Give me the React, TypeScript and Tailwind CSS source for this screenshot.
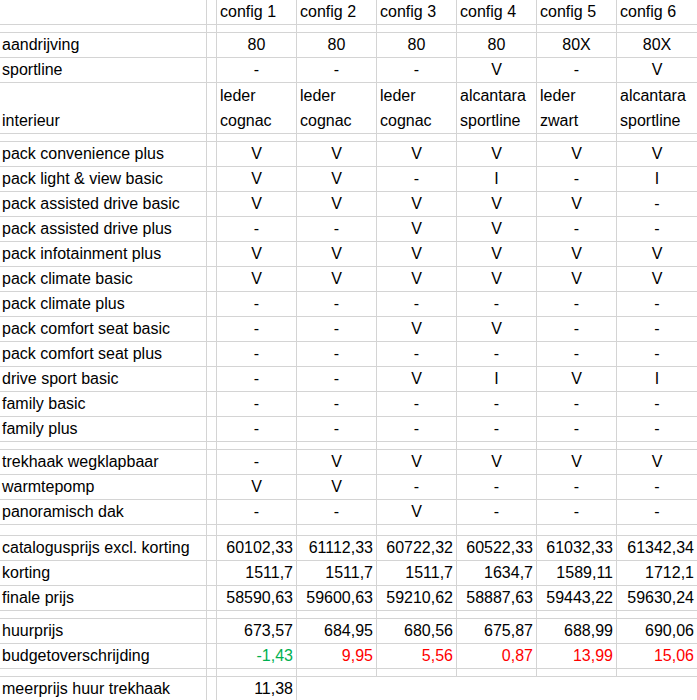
import React from 'react';

type Row =
  | { kind: 'gap'; tall?: boolean }
  | { kind: 'row'; label: string; cells: string[]; align?: 'center' | 'right'; colors?: string[]; tall?: boolean; partial?: boolean };

const packs: [string, string][] = [
  ['pack convenience plus', 'VVVVVV'],
  ['pack light & view basic', 'VV-I-I'],
  ['pack assisted drive basic', 'VVVVV-'],
  ['pack assisted drive plus', '--VV--'],
  ['pack infotainment plus', 'VVVVVV'],
  ['pack climate basic', 'VVVVVV'],
  ['pack climate plus', '------'],
  ['pack comfort seat basic', '--VV--'],
  ['pack comfort seat plus', '------'],
  ['drive sport basic', '--VIVI'],
  ['family basic', '------'],
  ['family plus', '------'],
];

const extras: [string, string][] = [
  ['trekhaak wegklapbaar', '-VVVVV'],
  ['warmtepomp', 'VV----'],
  ['panoramisch dak', '--V---'],
];

const green = 'text-[#00b050]';
const red = 'text-[#ff0000]';

const rows: Row[] = [
  { kind: 'gap' },
  { kind: 'row', label: 'aandrijving', cells: ['80', '80', '80', '80', '80X', '80X'] },
  { kind: 'row', label: 'sportline', cells: ['-', '-', '-', 'V', '-', 'V'] },
  { kind: 'row', label: 'interieur', tall: true, cells: ['leder|cognac', 'leder|cognac', 'leder|cognac', 'alcantara|sportline', 'leder|zwart', 'alcantara|sportline'] },
  { kind: 'gap' },
  ...packs.map(([l, v]) => ({ kind: 'row' as const, label: l, cells: v.split('') })),
  { kind: 'gap' },
  ...extras.map(([l, v]) => ({ kind: 'row' as const, label: l, cells: v.split('') })),
  { kind: 'gap', tall: true },
  { kind: 'row', label: 'catalogusprijs excl. korting', align: 'right', cells: ['60102,33', '61112,33', '60722,32', '60522,33', '61032,33', '61342,34'] },
  { kind: 'row', label: 'korting', align: 'right', cells: ['1511,7', '1511,7', '1511,7', '1634,7', '1589,11', '1712,1'] },
  { kind: 'row', label: 'finale prijs', align: 'right', cells: ['58590,63', '59600,63', '59210,62', '58887,63', '59443,22', '59630,24'] },
  { kind: 'gap' },
  { kind: 'row', label: 'huurprijs', align: 'right', cells: ['673,57', '684,95', '680,56', '675,87', '688,99', '690,06'] },
  { kind: 'row', label: 'budgetoverschrijding', align: 'right', colors: [green, red, red, red, red, red], cells: ['-1,43', '9,95', '5,56', '0,87', '13,99', '15,06'] },
  { kind: 'gap' },
  { kind: 'row', label: 'meerprijs huur trekhaak', align: 'right', partial: true, cells: ['11,38', '', '', '', '', ''] },
];

const cell = 'border-r border-b border-[#d4d4d4]';

export default function App() {
  return (
    <div className="w-[697px] h-[700px] overflow-hidden bg-white text-[16px] text-black" style={{ fontFamily: '"Liberation Sans", Arial, sans-serif' }}>
      <div className="grid grid-cols-[207px_10px_repeat(6,80px)]">
        {/* header */}
        <div className={`${cell} h-[25px]`} />
        <div className={`${cell} h-[25px]`} />
        {[1, 2, 3, 4, 5, 6].map((n) => (
          <div key={n} className={`${cell} h-[25px] px-[3px] flex items-end whitespace-nowrap ${n === 6 ? 'border-r-0' : ''}`}>config {n}</div>
        ))}
        {rows.map((r, i) => {
          if (r.kind === 'gap') {
            return (
              <React.Fragment key={i}>
                {Array.from({ length: 8 }).map((_, j) => (
                  <div key={j} className={`${cell} ${r.tall ? 'h-[11px]' : 'h-[8px]'} ${j === 7 ? 'border-r-0' : ''}`} />
                ))}
              </React.Fragment>
            );
          }
          const h = r.tall ? 'h-[51px]' : 'h-[25px]';
          return (
            <React.Fragment key={i}>
              <div className={`${cell} ${h} px-[2px] flex items-end whitespace-nowrap`}>{r.label}</div>
              <div className={`${cell} ${h}`} />
              {r.cells.map((c, j) => {
                const hide = r.partial && j > 0;
                if (r.tall) {
                  const [a, b] = c.split('|');
                  return (
                    <div key={j} className={`${cell} ${h} px-[3px] flex flex-col justify-end leading-[25px] ${j === 5 ? 'border-r-0' : ''}`}>
                      <span>{a}</span>
                      <span>{b}</span>
                    </div>
                  );
                }
                return (
                  <div
                    key={j}
                    className={`${hide ? '' : cell} ${h} px-[3px] flex items-end whitespace-nowrap ${r.align === 'right' ? 'justify-end' : 'justify-center'} ${r.colors ? r.colors[j] : ''} ${j === 5 ? 'border-r-0' : ''}`}
                  >
                    {c}
                  </div>
                );
              })}
            </React.Fragment>
          );
        })}
      </div>
    </div>
  );
}
